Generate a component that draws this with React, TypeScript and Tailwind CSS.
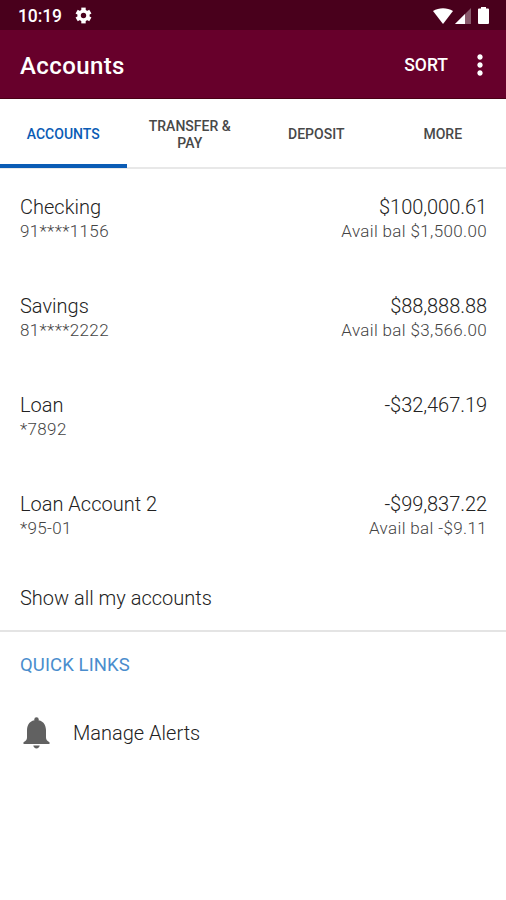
import { MdMoreVert } from "react-icons/md";

const tabs = ["Accounts", "Transfer & Pay", "Deposit", "More"];

const accounts = [
  { name: "Checking", number: "91****1156", balance: "$100,000.61", available: "$1,500.00" },
  { name: "Savings", number: "81****2222", balance: "$88,888.88", available: "$3,566.00" },
  { name: "Loan", number: "*7892", balance: "-$32,467.19" },
  { name: "Loan Account 2", number: "*95-01", balance: "-$99,837.22", available: "-$9.11" },
];

function GearIcon() {
  return (
    <svg width="17" height="17" viewBox="0 0 17 17" className="ml-[13px]">
      <g stroke="currentColor" strokeWidth="4.4">
        <path d="M8.5 .6V16.4" />
        <path d="M1.66 4.55 15.34 12.45" />
        <path d="M15.34 4.55 1.66 12.45" />
      </g>
      <circle cx="8.5" cy="8.5" r="6.1" fill="currentColor" />
      <circle cx="8.5" cy="8.5" r="2.7" fill="#49001c" />
    </svg>
  );
}

function BellIcon() {
  return (
    <svg width="27" height="32" viewBox="0 0 27 32" fill="currentColor" className="ml-[3px] text-[#616161]">
      <circle cx="13.5" cy="2.4" r="2.2" />
      <path d="M13.5 3C7.5 3 4.2 7.2 4 13V20.5Q4 23.5 .5 25.3V27H26.5V25.3Q23 23.5 23 20.5V13C22.8 7.2 19.5 3 13.5 3Z" />
      <path d="M10.3 28.6H16.7Q16.2 31.4 13.5 31.4T10.3 28.6Z" />
    </svg>
  );
}

function StatusBar() {
  return (
    <div className="flex h-[30px] items-center bg-[#49001c] pl-[18px] pr-[17px] pt-px text-white">
      <span className="text-[17.5px] leading-6 font-medium tracking-[-0.1px]">10:19</span>
      <GearIcon />
      <div className="ml-auto flex items-center">
        <svg width="20" height="16" viewBox="0 0 20 16" fill="currentColor">
          <path d="M0 3C6-.8 14-.8 20 3L10 16Z" />
        </svg>
        <svg width="16" height="16" viewBox="0 0 16 16" fill="currentColor" className="ml-[2px]">
          <path d="M0 16 16 0V16Z" opacity=".35" />
          <path d="M0 16 10 6V16Z" />
        </svg>
        <svg width="11" height="17" viewBox="0 0 11 17" fill="currentColor" className="ml-[7px]">
          <path d="M3 0H8V1.5H10Q11 1.5 11 2.5V16Q11 17 10 17H1Q0 17 0 16V2.5Q0 1.5 1 1.5H3Z" />
        </svg>
      </div>
    </div>
  );
}

function Header() {
  return (
    <header className="flex h-[69px] items-center border-b border-[#4a0015] bg-[#67002b] pl-5 pr-[10px] pt-[2px] text-white">
      <h1 className="pt-px text-[24px] leading-8 font-medium tracking-[0.4px]">Accounts</h1>
      <button className="ml-auto text-[17.5px] leading-6 font-medium">SORT</button>
      <MdMoreVert size={32} className="ml-[16px]" />
    </header>
  );
}

function Tabs() {
  return (
    <nav className="grid h-[70px] grid-cols-4 border-b-2 border-[#e8e8e8]">
      {tabs.map((tab, i) => (
        <button
          key={tab}
          className={
            i === 0
              ? "-mb-px flex items-center justify-center border-b-4 border-[#0b5cb5] pt-[5px] text-[14px] leading-[17px] font-medium text-[#0b5cb5] uppercase"
              : "flex items-center justify-center px-4 pt-[3px] text-[14px] leading-[17px] font-medium text-[#484848] uppercase"
          }
        >
          {tab}
        </button>
      ))}
    </nav>
  );
}

function App() {
  return (
    <div className="flex h-[900px] w-[506px] flex-col bg-white font-['Roboto',sans-serif]">
      <StatusBar />
      <Header />
      <Tabs />

      <section className="border-b-2 border-[#e4e4e4] px-5 pt-[26px] pb-5 text-[#222]">
        {accounts.map((account) => (
          <div key={account.name} className="flex h-[99px] justify-between">
            <div>
              <p className="text-[20px] leading-6 font-light">{account.name}</p>
              <p className="text-[17px] leading-[25px] font-light tracking-[0.35px] text-[#444]">{account.number}</p>
            </div>
            <div className="-mr-px text-right">
              <p className="text-[20px] leading-6 font-light tracking-[-0.05px]">{account.balance}</p>
              {account.available && (
                <p className="text-[17px] leading-[25px] font-light tracking-[0.35px] text-[#444]">
                  Avail bal {account.available}
                </p>
              )}
            </div>
          </div>
        ))}
        <button className="-mt-[5px] block text-[20px] leading-6 font-light">Show all my accounts</button>
      </section>

      <section className="px-5 pt-[21px]">
        <h2 className="text-[18.5px] leading-6 tracking-[0.1px] text-[#4a8dcd]">QUICK LINKS</h2>
        <button className="mt-10 flex items-center text-[#222]">
          <BellIcon />
          <span className="ml-[23px] text-[20px] leading-6 font-light">Manage Alerts</span>
        </button>
      </section>
    </div>
  );
}

export default App;
